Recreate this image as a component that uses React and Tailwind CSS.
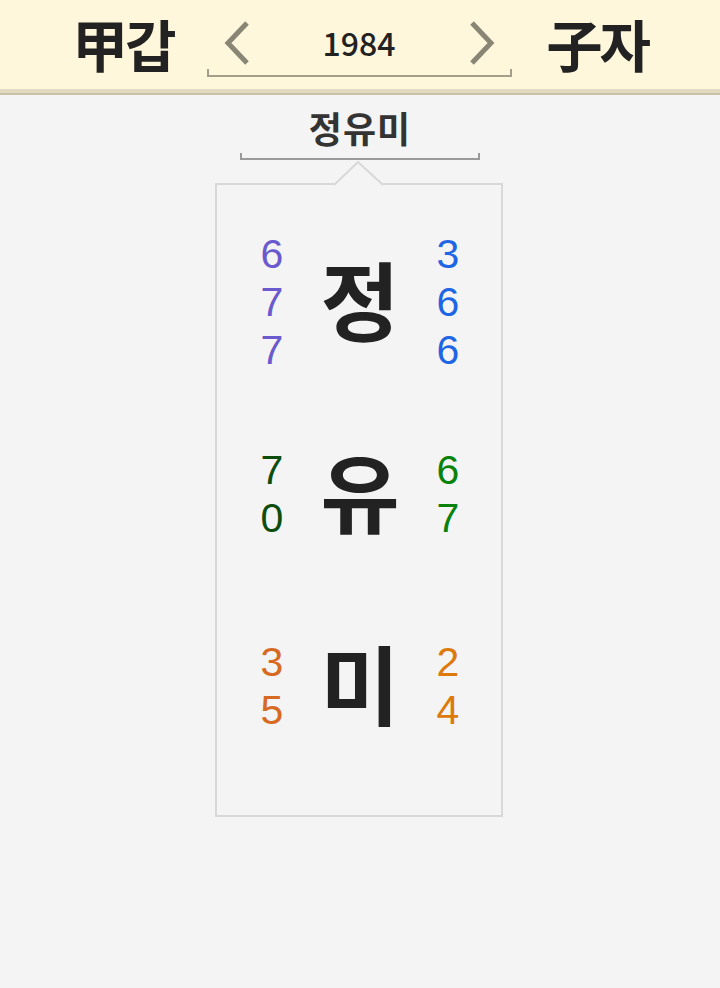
const rows = [
  { ch: "정", left: ["6", "7", "7"], right: ["3", "6", "6"], lc: "text-[#6a5acd]", rc: "text-[#1f66e5]" },
  { ch: "유", left: ["7", "0"], right: ["6", "7"], lc: "text-[#0c4d0c]", rc: "text-[#088208]" },
  { ch: "미", left: ["3", "5"], right: ["2", "4"], lc: "text-[#d66a22]", rc: "text-[#dc7a0c]" },
];

function Digits({ items, color }) {
  return (
    <div
      className={`flex flex-col items-center w-[40px] ${color}`}
      style={{ fontFamily: '"Liberation Sans", sans-serif' }}
    >
      {items.map((d, i) => (
        <span key={i} className="text-[41px] leading-[48px]">
          {d}
        </span>
      ))}
    </div>
  );
}

function Chevron({ dir }) {
  return (
    <svg width="28" height="44" viewBox="0 0 28 44" className="mt-[-4px]">
      <polyline
        points={dir === "left" ? "24,2 5,22 24,42" : "4,2 23,22 4,42"}
        fill="none"
        stroke="#8a8676"
        strokeWidth="5"
      />
    </svg>
  );
}

export default function App() {
  return (
    <div
      className="min-h-[988px] bg-[#f4f4f4] text-[#222]"
      style={{ fontFamily: '"Noto Sans CJK KR", "Noto Sans", sans-serif' }}
    >
      {/* top bar */}
      <div className="h-[89px] bg-[#fff7dc] flex items-center justify-center">
        <div className="text-[56px] font-bold leading-none tracking-[-3px] mr-[33px] mt-[-4px]">甲갑</div>

        {/* year picker */}
        <div className="relative w-[305px] h-[89px] flex items-center justify-between px-[16px]">
          <Chevron dir="left" />
          <span className="text-[32px] leading-none font-medium mt-[-6px]">1984</span>
          <Chevron dir="right" />
          <div className="absolute left-0 right-0 top-[69px] h-[8px] border-2 border-t-0 border-[#a39f8a]" />
        </div>

        <div className="text-[56px] font-bold leading-none tracking-[-3px] ml-[35px] mt-[-4px]">子자</div>
      </div>
      <div className="h-[4px] bg-[#e2dabf]" />
      <div className="h-[2px] bg-[#c9c2ab]" />

      {/* full name */}
      <div className="flex flex-col items-center">
        <div className="mt-[8px] text-[36px] font-bold leading-[48px] text-[#333] tracking-[1px]">정유미</div>
        <div className="w-[240px] h-[7px] border-2 border-t-0 border-[#999] mt-[2px]" />

        {/* card */}
        <div className="relative mt-[23px] w-[288px] h-[634px] border-2 border-[#d8d8d8] pt-[21px] ml-[-2px]">
          <svg
            className="absolute left-[116px] top-[-24px]"
            width="52"
            height="26"
            viewBox="0 0 52 26"
          >
            <polygon points="1,24 25,1 50,24" fill="#f4f4f4" />
            <polyline points="1,24 25,1 50,24" fill="none" stroke="#d8d8d8" strokeWidth="2" />
          </svg>

          {rows.map((r) => (
            <div key={r.ch} className="h-[192px] flex items-center justify-between pl-[35px] pr-[33px]">
              <Digits items={r.left} color={r.lc} />
              <span className="text-[86px] font-bold leading-none mt-[-8px]">{r.ch}</span>
              <Digits items={r.right} color={r.rc} />
            </div>
          ))}
        </div>
      </div>
    </div>
  );
}
